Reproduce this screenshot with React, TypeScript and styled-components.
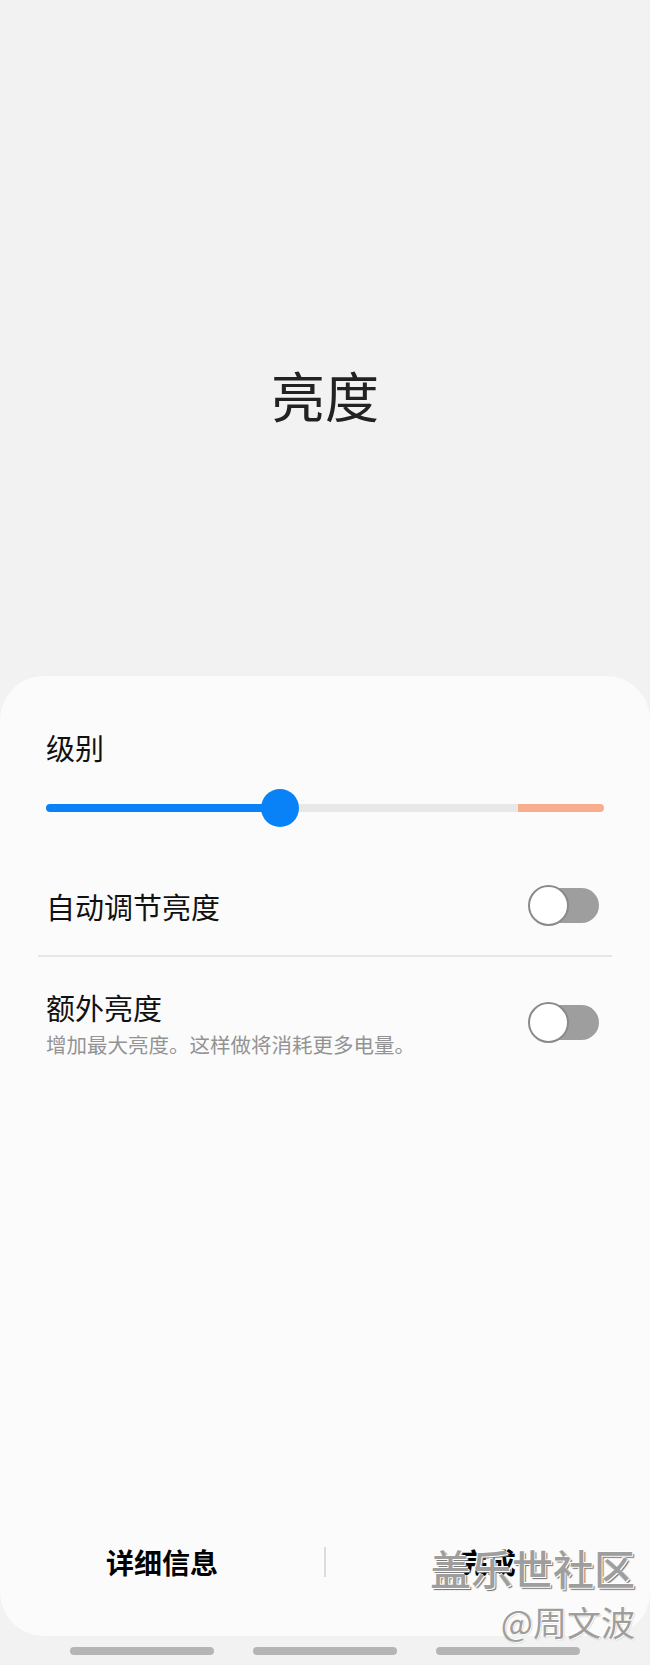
import React from 'react';
import styled, { createGlobalStyle } from 'styled-components';

const GlobalStyle = createGlobalStyle`
  html, body {
    margin: 0;
    padding: 0;
    background: #f2f2f2;
  }
  body {
    font-family: 'Noto Sans CJK SC', 'Noto Sans', sans-serif;
  }
`;

const Page = styled.div`
  position: relative;
  width: 650px;
  height: 1665px;
  background: #f2f2f2;
  display: flex;
  flex-direction: column;
  overflow: hidden;
`;

const Header = styled.div`
  height: 676px;
  display: flex;
  justify-content: center;
`;

const Title = styled.h1`
  margin: 360px 0 0;
  font-size: 54px;
  line-height: 70px;
  font-weight: 400;
  color: #222;
`;

const Sheet = styled.div`
  height: 960px;
  background: #fbfbfb;
  border-radius: 44px;
  display: flex;
  flex-direction: column;
`;

const SectionLabel = styled.div`
  margin: 51px 0 0 46px;
  font-size: 29px;
  line-height: 40px;
  color: #111;
`;

const SliderWrap = styled.div`
  position: relative;
  margin: 21px 46px 0 46px;
  height: 40px;
  display: flex;
  align-items: center;
`;

const Track = styled.div`
  display: flex;
  width: 100%;
  height: 8px;
  border-radius: 4px;
  overflow: hidden;
`;

const TrackPart = styled.div<{ $color: string; $grow: number }>`
  flex: ${(p) => p.$grow} 0 0;
  background: ${(p) => p.$color};
`;

const Thumb = styled.div`
  position: absolute;
  top: 1px;
  width: 38px;
  height: 38px;
  margin-left: -19px;
  border-radius: 50%;
  background: #0a82f7;
`;

const Row = styled.div<{ $height: number; $top?: number }>`
  height: ${(p) => p.$height}px;
  margin-top: ${(p) => p.$top || 0}px;
  display: flex;
  align-items: center;
  justify-content: space-between;
  padding: 0 51px 0 46px;
  box-sizing: border-box;
`;

const RowText = styled.div`
  display: flex;
  flex-direction: column;
`;

const RowTitle = styled.div`
  font-size: 29px;
  line-height: 36px;
  color: #111;
`;

const RowSub = styled.div`
  margin-top: 6px;
  font-size: 20.5px;
  line-height: 26px;
  color: #939393;
`;

const Divider = styled.div`
  height: 2px;
  margin: 0 38px;
  background: #e6e6e6;
`;

const SwitchBox = styled.div`
  position: relative;
  width: 71px;
  height: 41px;
  flex-shrink: 0;
`;

const SwitchTrack = styled.div`
  position: absolute;
  right: 0;
  top: 3px;
  width: 52px;
  height: 35px;
  border-radius: 0 18px 18px 0;
  background: #9e9e9e;
`;

const SwitchKnob = styled.div`
  position: absolute;
  left: 0;
  top: 0;
  width: 41px;
  height: 41px;
  box-sizing: border-box;
  border-radius: 50%;
  border: 2.5px solid #8a8a8a;
  background: #fff;
`;

const Spacer = styled.div`
  flex: 1;
`;

const Footer = styled.div`
  display: flex;
  align-items: center;
  height: 60px;
  margin-bottom: 44px;
`;

const FooterButton = styled.div`
  flex: 1;
  text-align: center;
  font-size: 28px;
  line-height: 40px;
  font-weight: 700;
  color: #000;
`;

const FooterDivider = styled.div`
  width: 1.5px;
  height: 30px;
  background: #dcdcdc;
`;

const NavBar = styled.div`
  display: flex;
  justify-content: center;
  gap: 39px;
  padding-top: 11px;
`;

const NavPill = styled.div`
  width: 144px;
  height: 8px;
  border-radius: 4px;
  background: #b5b5b5;
`;

// watermark stamped over the screenshot
const Watermark = styled.div`
  position: absolute;
  right: 15px;
  top: 1540px;
  display: flex;
  flex-direction: column;
  align-items: flex-end;
  color: #9e9e9e;
  pointer-events: none;
  text-shadow: -1px -1px 0 #fff, 1px 1px 0 #fff, 2px 2px 1px #6f6f6f;
`;

const WatermarkBig = styled.div`
  font-size: 41px;
  line-height: 54px;
  font-weight: 500;
`;

const WatermarkSmall = styled.div`
  margin-top: 6px;
  font-size: 34px;
  line-height: 44px;
  text-shadow: -1px -1px 0 #fff, 1px 1px 0 #fff, 1px 1px 1px #888;
`;

const Switch = () => (
  <SwitchBox>
    <SwitchTrack />
    <SwitchKnob />
  </SwitchBox>
);

const Slider = ({ value, limit }: { value: number; limit: number }) => (
  <SliderWrap>
    <Track>
      <TrackPart $color="#0a82f7" $grow={value} />
      <TrackPart $color="#e8e8e8" $grow={limit - value} />
      <TrackPart $color="#f8ad8f" $grow={1 - limit} />
    </Track>
    <Thumb style={{ left: `${value * 100}%` }} />
  </SliderWrap>
);

const App = () => {
  return (
    <Page>
      <GlobalStyle />
      <Header>
        <Title>亮度</Title>
      </Header>
      <Sheet>
        <SectionLabel>级别</SectionLabel>
        <Slider value={0.419} limit={0.846} />
        <Row $height={99} $top={28}>
          <RowTitle>自动调节亮度</RowTitle>
          <Switch />
        </Row>
        <Divider />
        <Row $height={131}>
          <RowText>
            <RowTitle>额外亮度</RowTitle>
            <RowSub>增加最大亮度。这样做将消耗更多电量。</RowSub>
          </RowText>
          <Switch />
        </Row>
        <Spacer />
        <Footer>
          <FooterButton>详细信息</FooterButton>
          <FooterDivider />
          <FooterButton>完成</FooterButton>
        </Footer>
      </Sheet>
      <NavBar>
        <NavPill />
        <NavPill />
        <NavPill />
      </NavBar>
      <Watermark>
        <WatermarkBig>盖乐世社区</WatermarkBig>
        <WatermarkSmall>@周文波</WatermarkSmall>
      </Watermark>
    </Page>
  );
};

export default App;
